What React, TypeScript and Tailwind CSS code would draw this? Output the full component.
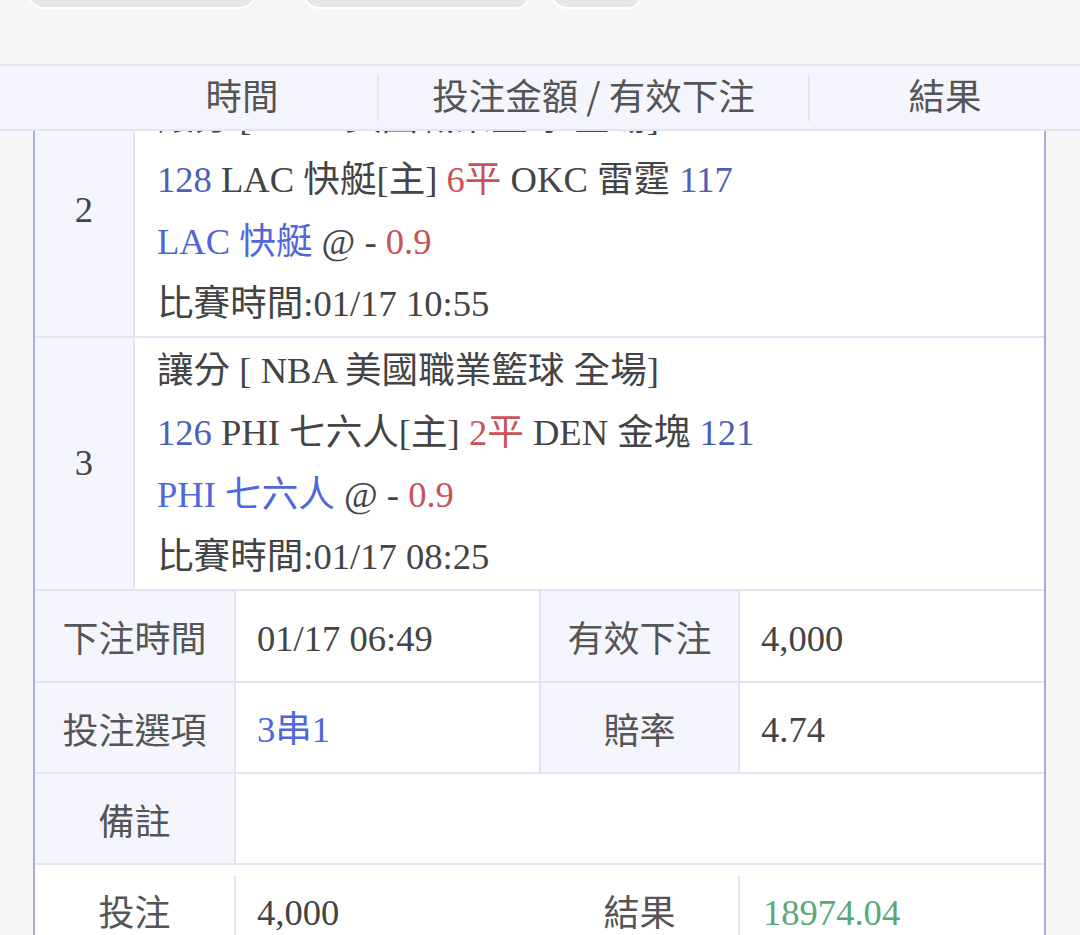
import React from "react";

const serif = "font-['Liberation_Serif','Noto_Sans_CJK_TC',serif]";
const sans = "font-['Noto_Sans_CJK_TC','Noto_Sans',sans-serif]";

const Blue = ({ children }: { children: React.ReactNode }) => (
  <span className="text-[#4e5fb8]">{children}</span>
);
const Blue2 = ({ children }: { children: React.ReactNode }) => (
  <span className="text-[#4f66dc]">{children}</span>
);
const Red = ({ children }: { children: React.ReactNode }) => (
  <span className="text-[#c9525b]">{children}</span>
);

function MatchRow({
  n,
  lines,
}: {
  n: string;
  lines: React.ReactNode[];
}) {
  return (
    <div className="flex border-b-2 border-[#e2e3f3]">
      <div className="w-[100px] shrink-0 bg-[#f5f6fd] border-r-2 border-[#e2e3f3] flex items-center justify-center text-[#444]">
        {n}
      </div>
      <div className="flex-1 bg-white pl-[22px] pt-[2px] pb-[1px]">
        {lines.map((l, i) => (
          <div key={i} className="h-[62px] leading-[62px] whitespace-nowrap text-[#444]">
            {l}
          </div>
        ))}
      </div>
    </div>
  );
}

const label = `flex items-center justify-center ${sans} text-[#555] text-[36px]`;
const value = "flex items-center pl-[21px] pt-[6px]";
const lastLabel = `${sans} text-[#555] text-[36px] text-center leading-[62px] pt-[3px]`;
const lastValue = "leading-[62px] pt-[6px] pl-[21px]";

export default function App() {
  return (
    <div className={`w-[1080px] h-[935px] overflow-hidden bg-[#f6f6f6] ${serif} text-[36.6px]`}>
      {/* top buttons */}
      <div className="h-[64px] flex items-start">
        <div className="flex -mt-[32px] pl-[28px]">
          <div className="w-[228px] h-[41px] rounded-[16px] bg-[#e7e7e7] border-2 border-white" />
          <div className="w-[228px] h-[41px] rounded-[16px] bg-[#e7e7e7] border-2 border-white ml-[47px]" />
          <div className="w-[92px] h-[41px] rounded-[16px] bg-[#e7e7e7] border-2 border-white ml-[20px]" />
        </div>
      </div>

      {/* header */}
      <div className={`h-[67px] bg-[#f5f6fd] border-t-2 border-b-2 border-[#e2e3f3] flex items-center pl-[107px] ${sans} text-[#555] text-[36.5px] relative z-10`}>
        <div className="w-[270px] text-center leading-none -mt-[5px]">時間</div>
        <div className="w-[2px] h-[46px] bg-[#e4e5ee]" />
        <div className="w-[429px] text-center leading-none -mt-[5px]">投注金額 / 有效下注</div>
        <div className="w-[2px] h-[46px] bg-[#e4e5ee]" />
        <div className="flex-1 text-center leading-none -mt-[5px]">結果</div>
      </div>

      {/* table */}
      <div className="h-[804px] overflow-hidden">
        <div className="-mt-[46px] ml-[33px] w-[1013px] border-l-2 border-r-2 border-[#a9add6]">
          <MatchRow
            n="2"
            lines={[
              <>讓分 [ NBA 美國職業籃球 全場]</>,
              <>
                <Blue>128</Blue> LAC 快艇[主] <Red>6平</Red> OKC 雷霆 <Blue>117</Blue>
              </>,
              <>
                <Blue2>LAC 快艇</Blue2> @ - <Red>0.9</Red>
              </>,
              <>比賽時間:01/17 10:55</>,
            ]}
          />
          <MatchRow
            n="3"
            lines={[
              <>讓分 [ NBA 美國職業籃球 全場]</>,
              <>
                <Blue>126</Blue> PHI 七六人[主] <Red>2平</Red> DEN 金塊 <Blue>121</Blue>
              </>,
              <>
                <Blue2>PHI 七六人</Blue2> @ - <Red>0.9</Red>
              </>,
              <>比賽時間:01/17 08:25</>,
            ]}
          />

          {/* summary */}
          <div className="grid grid-cols-[201px_305px_199px_1fr] h-[92px] border-b-2 border-[#e2e3f3]">
            <div className={`bg-[#f5f6fd] border-r-2 border-[#e2e3f3] ${label}`}>下注時間</div>
            <div className={`bg-white border-r-2 border-[#e2e3f3] ${value} text-[#444]`}>01/17 06:49</div>
            <div className={`bg-[#f5f6fd] border-r-2 border-[#e2e3f3] ${label}`}>有效下注</div>
            <div className={`bg-white ${value} text-[#444]`}>4,000</div>
          </div>
          <div className="grid grid-cols-[201px_305px_199px_1fr] h-[91px] border-b-2 border-[#e2e3f3]">
            <div className={`bg-[#f5f6fd] border-r-2 border-[#e2e3f3] ${label}`}>投注選項</div>
            <div className={`bg-white border-r-2 border-[#e2e3f3] ${value} text-[#4f66dc]`}>3串1</div>
            <div className={`bg-[#f5f6fd] border-r-2 border-[#e2e3f3] ${label}`}>賠率</div>
            <div className={`bg-white ${value} text-[#444]`}>4.74</div>
          </div>
          <div className="grid grid-cols-[201px_1fr] h-[91px] border-b-2 border-[#e2e3f3]">
            <div className={`bg-[#f5f6fd] border-r-2 border-[#e2e3f3] ${label}`}>備註</div>
            <div className="bg-white" />
          </div>
          <div className="grid grid-cols-[201px_305px_199px_1fr] h-[92px] bg-white pt-[11px]">
            <div className={`border-r-2 border-[#e2e3f3] ${lastLabel}`}>投注</div>
            <div className={`${lastValue} text-[#444]`}>4,000</div>
            <div className={`border-r-2 border-[#e2e3f3] ${lastLabel}`}>結果</div>
            <div className={`${lastValue} pl-[23px] text-[#5aa878]`}>18974.04</div>
          </div>
        </div>
      </div>
    </div>
  );
}
